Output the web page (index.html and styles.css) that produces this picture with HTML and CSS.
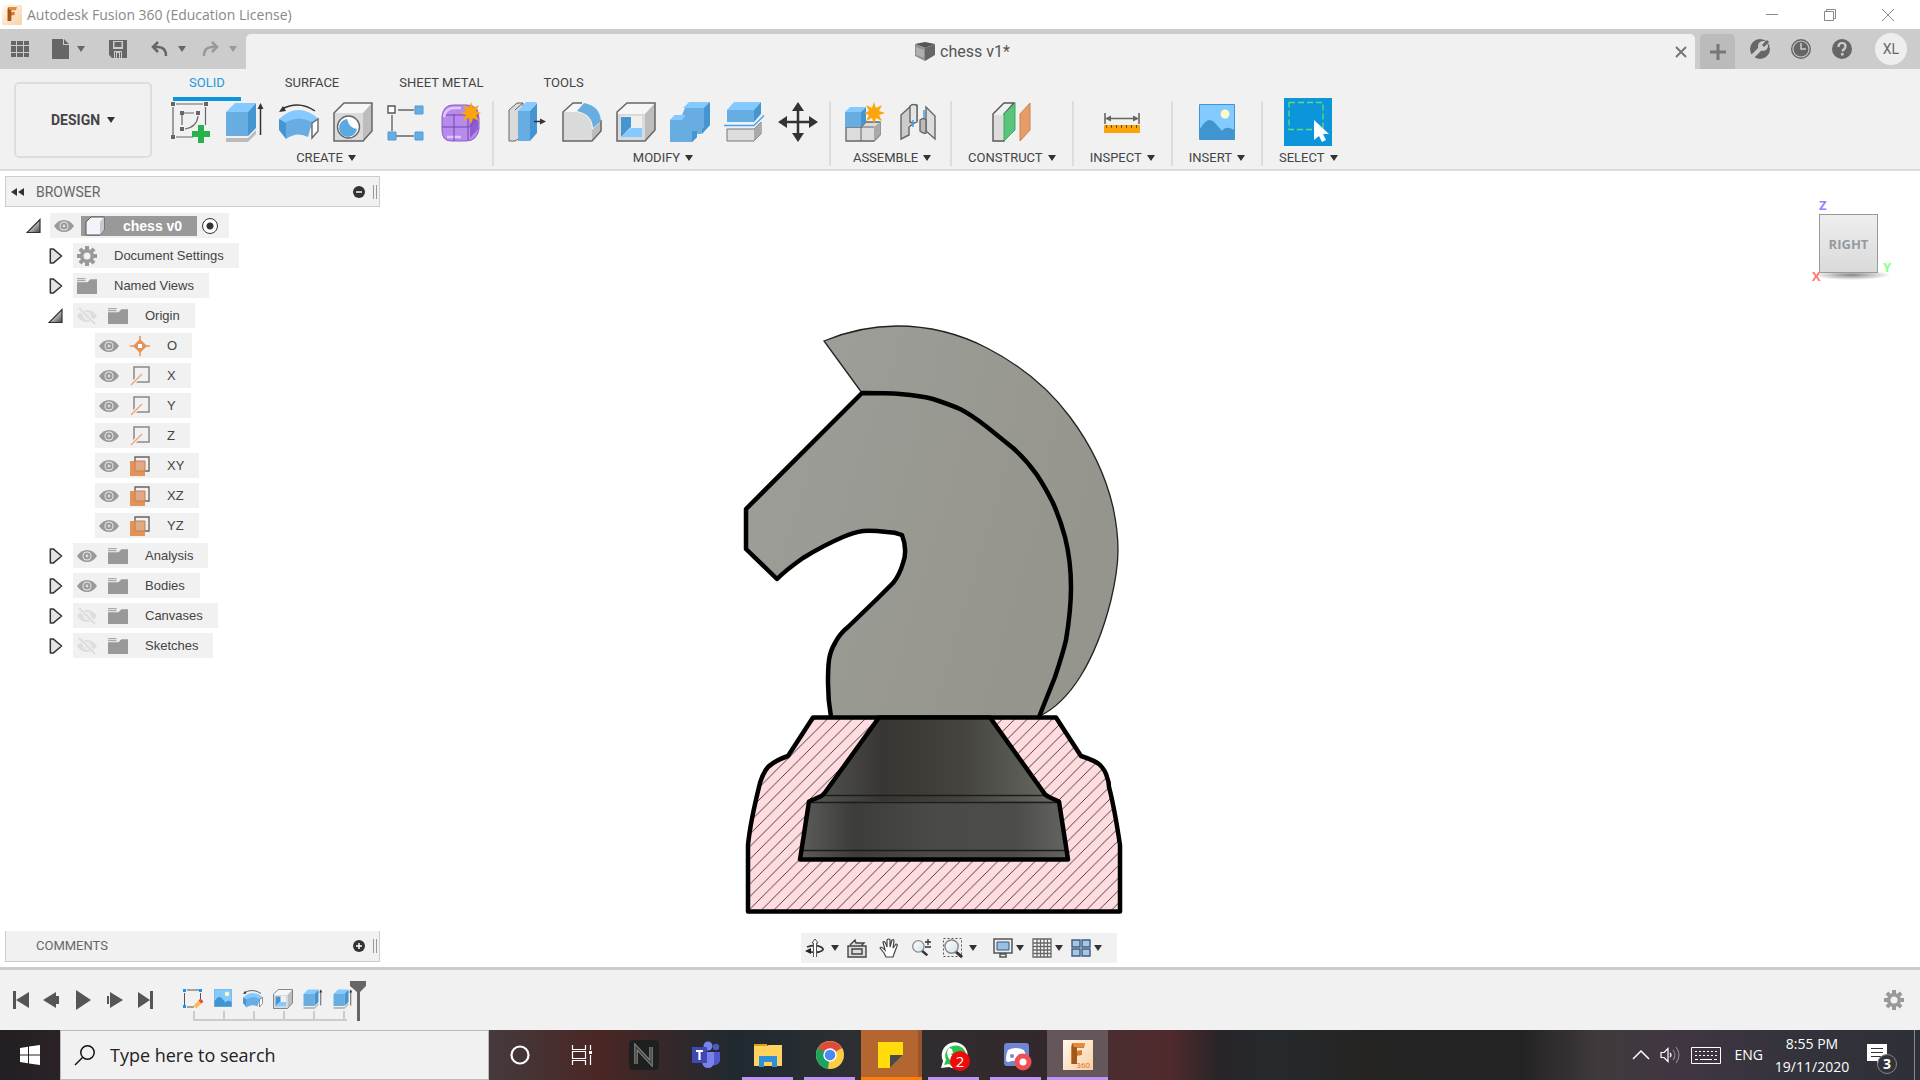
FILE: index.html
```html
<!DOCTYPE html>
<html lang="en">
<head>
<meta charset="utf-8">
<title>Autodesk Fusion 360 (Education License)</title>
<link rel="stylesheet" href="styles.css">
</head>
<body>
<svg class="defs" aria-hidden="true">
  <defs>
    <linearGradient id="tri" x1="0" y1="0" x2="1" y2="1"><stop offset="0.3" stop-color="#eee"/><stop offset="1" stop-color="#444"/></linearGradient>
    <linearGradient id="paper" x1="0" y1="0" x2="1" y2="1"><stop offset="0" stop-color="#fff8ef"/><stop offset="1" stop-color="#fbcfa4"/></linearGradient>
    <linearGradient id="lens" x1="0" y1="0" x2="1" y2="1"><stop offset="0" stop-color="#fff"/><stop offset="1" stop-color="#cfe2ea"/></linearGradient>
  </defs>
  <symbol id="fusion" viewBox="0 0 30 30"><path fill="url(#paper)" d="M0 0h30v30H0z"/><path fill="#d87c2a" d="M9 3h13l-1 5h-7l-1 3 6-1v5l-6 1v7l-5 1V7z"/><path fill="#a2571b" d="M9 3l5 5v16H9z"/><path fill="#e58b3c" d="M9 3h13l-2 4h-9z"/></symbol>
  <symbol id="eye" viewBox="0 0 20 14"><path fill="#999" d="M0 7Q4 1 10 1t10 6q-4 6-10 6T0 7z"/><circle cx="10" cy="7" r="4.500" fill="#eee"/><circle cx="10" cy="7" r="3.500" fill="#999"/><circle cx="10" cy="7" r="1.400" fill="#ddd"/></symbol>
  <symbol id="eye-off" viewBox="0 0 20 16"><path fill="#ddd" d="M0 8q4-6 10-6t10 6q-4 6-10 6T0 8z"/><circle cx="10" cy="8" r="4" fill="#eee"/><circle cx="10" cy="8" r="2.600" fill="#ddd"/><path d="M1 0l18 16" stroke="#f1f1f1" stroke-width="4"/><path d="M2 0l16 16" stroke="#ddd" stroke-width="2"/></symbol>
  <symbol id="folder" viewBox="0 0 21 17"><path fill="#999" d="M0 4.500h11l3-3h7V17H0z"/><path fill="#aaa" d="M0 0h9v1.500H0zM0 2.200h9v1.300H0z"/></symbol>
  <symbol id="gear" viewBox="0 0 20 20"><g fill="#999"><path d="M8 0h4v20H8z"/><path d="M8 0h4v20H8z" transform="rotate(45 10 10)"/><path d="M8 0h4v20H8z" transform="rotate(90 10 10)"/><path d="M8 0h4v20H8z" transform="rotate(135 10 10)"/><circle cx="10" cy="10" r="7"/></g><circle cx="10" cy="10" r="3.500" fill="#f1f1f1"/></symbol>
  <symbol id="closed" viewBox="0 0 13 17"><path d="M1 1h3l9 7.500-9 7.500H1z" fill="#e4e4e8" stroke="#333" stroke-width="1.600" stroke-linejoin="round"/></symbol>
  <symbol id="open" viewBox="0 0 15 15"><path d="M14 1v13H1z" fill="url(#tri)" stroke="#333" stroke-width="1.200"/></symbol>
  <symbol id="axis" viewBox="0 0 20 20"><path d="M4 1h15v15H4z" fill="none" stroke="#888" stroke-width="1.500"/><path d="M1 19L12 8" stroke="#f1f1f1" stroke-width="4"/><path d="M1 19L12 8" stroke="#f0a878" stroke-width="1.500"/></symbol>
  <symbol id="plane" viewBox="0 0 20 20"><path d="M5 1h14v14H5z" fill="none" stroke="#666" stroke-width="1.400"/><path fill="#e59257" d="M0 5h15v15H0z"/><path d="M5 5h10v10H5z" fill="#e0a983" stroke="#bd8158"/></symbol>
  <symbol id="origin" viewBox="0 0 20 20"><path d="M10 0v20M0 10h20" stroke="#e59257" stroke-width="1.500"/><path fill="#e59257" d="M10 3l7 7-7 7-7-7z"/><path fill="#fff" d="M8 8h4v4H8z"/></symbol>
  <symbol id="extrude" viewBox="0 0 40 40"><path fill="#bbb" d="M1 36l8-8h22v4l-8 8H1z"/><path fill="#f1f1f1" d="M1 34l8-8h22v2l-8 8H1z"/><path fill="#67ade2" d="M1 10h22v24H1z"/><path fill="#84c9ff" d="M1 10l9-9h21l-8 9z"/><path fill="#4595d1" d="M23 10l8-9v25l-8 8z"/><path d="M35.500 33V3" stroke="#333" stroke-width="1.500"/><path fill="#333" d="M35.500 1l3 6h-6z"/></symbol>
  <symbol id="revolve" viewBox="0 0 40 40"><path fill="#84c9ff" d="M0 17q19-18 40 0l-7 10q-13-9-26 0z"/><path fill="#67ade2" d="M7 20q13-7 26 0l-4 15q-11-6-22 2z"/><path fill="#4595d1" d="M0 17l7 4v16l-7-9z"/><path d="M33 21l6-4v12l-6 7z" fill="#fff" stroke="#666" stroke-width="1.400"/><path d="M3 7q17-9 33 2" fill="none" stroke="#333" stroke-width="1.500"/><path fill="#333" d="M0 10l4-6 3 5z"/></symbol>
  <symbol id="image" viewBox="0 0 36 36"><path d="M.5.500h35v35H.500z" fill="#83cbff" stroke="#4094d0"/><path fill="#4094d0" d="M1 25q8-14 15-6l7 8q4-6 12-1v9H1z"/><circle cx="26" cy="10" r="4.500" fill="#fdf9c9"/></symbol>
  <symbol id="shell" viewBox="0 0 40 40"><path d="M1 12L12 1h27L29 12z" fill="#f6f6f6"/><path fill="#bdbdbd" d="M29 12L39 1v27L29 39z"/><path fill="#dadada" d="M1 12h28v27H1z"/><path d="M1 10L11 1h28v27L29 39H1z" fill="none" stroke="#666" stroke-width="1.500"/><path fill="#efefef" d="M5 14h21v21H5z"/><path fill="#4595d1" d="M5 15h10v10L5 35z"/><path fill="#84c9ff" d="M5 35l10-9h11v9z"/></symbol>
  <symbol id="magnifier" viewBox="0 0 22 22"><path d="M13 14l7 6" stroke="#333" stroke-width="3"/><circle cx="9" cy="9" r="7" fill="url(#lens)" stroke="#888" stroke-width="1.500"/></symbol>
</svg>

<header class="titlebar">
  <svg class="i20"><use href="#fusion"/></svg>
  <h1>Autodesk Fusion 360 (Education License)</h1>
  <div class="window-buttons">
    <button aria-label="Minimise"><svg width="12" height="12" viewBox="0 0 12 12"><path d="M0 5.500h12" stroke="#888"/></svg></button>
    <button aria-label="Restore"><svg width="12" height="12" viewBox="0 0 12 12"><path d="M.5 2.500h9v9h-9zM2.500 2.500v-2h9v9h-2" fill="none" stroke="#888"/></svg></button>
    <button aria-label="Close"><svg width="12" height="12" viewBox="0 0 12 12"><path d="M0 0l12 12M12 0L0 12" stroke="#888"/></svg></button>
  </div>
</header>

<div class="appbar">
  <div class="quick">
    <button aria-label="Data panel"><svg width="18" height="18" viewBox="0 0 18 18" fill="#666"><path d="M0 1h5v4H0zm6 0h6v4H6zm7 0h5v4h-5zM0 6h5v6H0zm6 0h6v6H6zm7 0h5v6h-5zM0 13h5v4H0zm6 0h6v4H6zm7 0h5v4h-5z"/></svg></button>
    <button class="file" aria-label="File"><svg width="17" height="20" viewBox="0 0 17 20"><path fill="#666" d="M0 0h11v6h6v14H0zM12 0l5 5h-5z"/></svg><span class="caret"></span></button>
    <button class="save" aria-label="Save"><svg width="18" height="18" viewBox="0 0 18 18"><path fill="#666" d="M0 0h18v18H3l-3-3z"/><path d="M4 1h10v8H4zM5 11h8v7H5z" fill="#ccc"/><path d="M5.500 2h7v5h-7zM8 13h2v5H8zM6 12h1v6H6zm5 0h1v6h-1z" fill="#666"/></svg></button>
    <button class="undo" aria-label="Undo"><svg width="17" height="16" viewBox="0 0 17 16"><path d="M7 1L2 6l5 5M2 6h5q8 0 8 9" fill="none" stroke="#666" stroke-width="2.500"/></svg><span class="caret"></span></button>
    <button class="redo" aria-label="Redo"><svg width="17" height="16" viewBox="0 0 17 16"><path d="M10 1l5 5-5 5M15 6h-5q-8 0-8 9" fill="none" stroke="#999" stroke-width="2.500"/></svg><span class="caret"></span></button>
  </div>
  <div class="doc-tab">
    <svg width="20" height="20" viewBox="0 0 20 20"><path fill="#555" d="M0 2l10-2 10 2-10 4z"/><path fill="#8f9191" d="M0 2l10 4v13L0 14z"/><path fill="#aeb0b0" d="M1 5l8 3v8l-8-3z"/><path fill="#666" d="M10 6l10-4v11l-10 6z"/></svg>
    <span>chess v1*</span>
    <button class="tab-close" aria-label="Close tab"><svg width="12" height="12" viewBox="0 0 12 12"><path d="M1 1l10 10M11 1L1 11" stroke="#777" stroke-width="2"/></svg></button>
  </div>
  <button class="new-tab" aria-label="New tab"><svg width="16" height="16" viewBox="0 0 16 16"><path d="M8 0v16M0 8h16" stroke="#777" stroke-width="3"/></svg></button>
  <div class="account">
    <button aria-label="Extensions"><svg width="20" height="20" viewBox="0 0 20 20"><circle cx="10" cy="10" r="10" fill="#666"/><path d="M2 18L11 9" stroke="#ccc" stroke-width="4"/><circle cx="13" cy="7" r="5" fill="#ccc"/><path d="M13 7l5-5" stroke="#666" stroke-width="3"/></svg></button>
    <button aria-label="Job status"><svg width="20" height="20" viewBox="0 0 20 20"><circle cx="10" cy="10" r="9.300" fill="none" stroke="#666" stroke-width="1.400"/><circle cx="10" cy="10" r="7.500" fill="#666"/><path d="M10 4v6h5" fill="none" stroke="#ccc" stroke-width="1.500"/></svg></button>
    <button aria-label="Help"><svg width="20" height="20" viewBox="0 0 20 20"><circle cx="10" cy="10" r="10" fill="#666"/><path d="M6.500 8q0-4 3.500-4t3.500 3-3.500 5" fill="none" stroke="#ccc" stroke-width="2.200"/><path fill="#ccc" d="M9 14h2.500v2.500H9z"/></svg></button>
    <button class="avatar">XL</button>
  </div>
</div>

<div class="toolbar">
  <button class="workspace">DESIGN<span class="caret"></span></button>
  <div class="ribbon">
    <nav class="tabs">
      <a class="active" href="#solid">SOLID</a><a href="#surface">SURFACE</a><a href="#sheet">SHEET METAL</a><a href="#tools">TOOLS</a>
    </nav>
    <div class="groups">
      <section class="group create">
        <div class="icons">
          <svg class="i40" viewBox="0 0 40 40"><path d="M5 2h27M2 5v28M5 35h17M34.500 5v18M13 11h10M11 13v10M14 27q12-2 13-13" fill="none" stroke="#666" stroke-width="1.200"/><path fill="#666" d="M0 0h4v4H0zM33 0h4v4h-4zM0 33h4v4H0zM9 9h4v4H9zM25 9h4v4h-4zM9 25h4v4H9z"/><path fill="#28b14c" d="M27 23h6v6h6v6h-6v6h-6v-6h-6v-6h6z"/></svg>
          <svg class="i40"><use href="#extrude"/></svg>
          <svg class="i40"><use href="#revolve"/></svg>
          <svg class="i40" viewBox="0 0 40 40"><path fill="#f6f6f6" d="M1 11L11 1h28L30 11z"/><path fill="#bdbdbd" d="M30 11l9-10v28L30 39z"/><path fill="#dadada" d="M1 11h29v28H1z"/><path d="M1 11L11 1h28v28L30 39H1z" fill="none" stroke="#666" stroke-width="1.500"/><circle cx="15.500" cy="25" r="11" fill="#fff" stroke="#666" stroke-width="1.400"/><path fill="#5ba9e2" d="M14 17q2 9 10 10a9 9 0 1 1-10-10z"/></svg>
          <svg class="i40" viewBox="0 0 40 40"><path d="M11 8h16M5 13v16M9 34h18" stroke="#666" stroke-width="1.400"/><path fill="#fff" stroke="#555" stroke-width="1.400" d="M1 4h7v7H1z"/><path fill="#67ade2" stroke="#4d9cd8" d="M28 4h8v8h-8zM1 30h8v8H1zM28 30h8v8h-8z"/></svg>
          <svg class="i40" viewBox="0 0 40 40"><path fill="#b68bec" stroke="#8a5cc4" d="M1 15Q2 3 12 3h14q12 0 12 14v10q-2 12-13 12H10Q1 39 1 28z"/><path fill="#8e5cd0" d="M29 16l8-9v20l-8 9z"/><path d="M3 15q1-8 9-9h8M6 35h14" stroke="#dfc8ff" stroke-width="2.500" fill="none"/><path d="M13 12v27M1 25h27l9-9M5 13h22M27 13v25" stroke="#7447ad" stroke-width="1" fill="none"/><path fill="#fba40b" d="M30 0l2 6 6-3-3 6 5 2-5 2 3 6-6-3-2 6-2-6-6 3 3-6-5-2 5-2-3-6 6 3z"/></svg>
        </div>
        <button class="label">CREATE<span class="caret"></span></button>
      </section>
      <section class="group modify">
        <div class="icons">
          <svg class="i40" viewBox="0 0 40 40"><path fill="#dadada" stroke="#666" d="M1 8l8-7h6v33l-8 5H1z"/><path d="M7 8l8-7" stroke="#666"/><path fill="#67ade2" d="M10 9h12v30H10z"/><path fill="#84c9ff" d="M10 9l8-9h11l-7 9z"/><path fill="#4595d1" d="M22 9l7-8v30l-7 8z"/><path d="M26 19.500h8" stroke="#333" stroke-width="1.500"/><path fill="#333" d="M38 19.500l-6-3v6z"/></svg>
          <svg class="i40" viewBox="0 0 40 40"><path fill="#f6f6f6" d="M1 10L10 1h10l-4 9z"/><path fill="#bdbdbd" d="M30 28l9-9v9l-9 11z"/><path fill="#dadada" d="M1 10h14q15 3 15 18v11H1z"/><path d="M20 1h-9L1 10v29h29l9-10V18" fill="none" stroke="#666" stroke-width="1.500"/><path fill="#67ade2" d="M15 9l7-8q16 3 17 18l-8 7Q30 12 15 9z"/></svg>
          <svg class="i40"><use href="#shell"/></svg>
          <svg class="i40" viewBox="0 0 40 40"><path fill="#67ade2" d="M0 18l5-5h7l3-7 5-5h20v22l-9 9h-4v3l-5 5H0z"/><path fill="#84c9ff" d="M0 18l5-5h11l-4 5zM13 6l6-6h21l-6 6z"/><path fill="#4595d1" d="M34 6l6-6v23l-8 9v-5l2-2zM22 40V29h5v6z"/></svg>
          <svg class="i40" viewBox="0 0 40 40"><path fill="#67ade2" d="M3 8h27v12H3z"/><path fill="#84c9ff" d="M3 8l7-8h27l-7 8z"/><path fill="#4595d1" d="M30 8l7-8v12l-7 8z"/><path d="M0 23.500h30l10-10" stroke="#42a5ef" stroke-width="1.500" fill="none"/><path d="M3 27h27l7-7v12l-7 7H3z" fill="#ddd" stroke="#777"/><path d="M30 27l7-7v12l-7 7z" fill="#aaa"/></svg>
          <svg class="i40" viewBox="0 0 40 40"><path d="M20 5v30M5 20h30" stroke="#333" stroke-width="2.500"/><path fill="#333" d="M20 0l6 9H14zM20 40l6-9H14zM0 20l9-6v12zM40 20l-9-6v12z"/></svg>
        </div>
        <button class="label">MODIFY<span class="caret"></span></button>
      </section>
      <section class="group assemble">
        <div class="icons">
          <svg class="i40" viewBox="0 0 40 40"><path d="M1 25h15l5-5h14v13l-6 6H1z" fill="#dcdcdc" stroke="#666" stroke-width="1.300"/><path fill="#aaa" d="M29 25l6-5v13l-6 6z"/><path d="M16 25h13M16 25v14" stroke="#666"/><path fill="#67ade2" d="M0 10h16v15H0z"/><path fill="#84c9ff" d="M0 10l5-5h16l-5 5z"/><path fill="#4595d1" d="M16 10l5-5v15l-5 5z"/><path fill="#fba40b" d="M29 0l2 6 6-3-3 6 6 2-6 2 3 6-6-3-2 6-2-6-6 3 3-6-5-2 5-2-3-6 6 3z"/></svg>
          <svg class="i40" viewBox="0 0 40 40"><g stroke="#666" stroke-width="1.400"><path fill="#ccc" d="M2 13L13 3h5v16l-8 6v8l-8 4z"/><path fill="#e4e4e4" d="M11 4q4-3 7 0v16q-3 2-7 0z"/><path fill="#dcdcdc" d="M27 5l9 9v23l-9-8z"/><path fill="#bbb" d="M21 18q4-3 6 0v13q-3 1-6-2z"/></g><path d="M14 18v7M25 8v8" stroke="#42a5ef" stroke-width="1.600"/></svg>
        </div>
        <button class="label">ASSEMBLE<span class="caret"></span></button>
      </section>
      <section class="group">
        <div class="icons"><svg class="i40" viewBox="0 0 40 40"><path d="M1 12L12 1h10L12 12v27H1z" fill="#f0f0f0" stroke="#555" stroke-width="1.400"/><path fill="#ddd" d="M2 13h10v25H2z"/><path fill="#5bc47c" stroke="#39a961" d="M12 12L23 1v27L12 39z"/><path fill="#e59c69" stroke="#ce8150" d="M28 12L38 1v27L28 39z"/></svg></div>
        <button class="label">CONSTRUCT<span class="caret"></span></button>
      </section>
      <section class="group">
        <div class="icons"><svg class="i40" viewBox="0 0 40 40"><path d="M3 11v11M37 11v11M5 16.500h30" stroke="#666" stroke-width="1.600"/><path fill="#666" d="M3 16.500l6-3v6zM37 16.500l-6-3v6z"/><path fill="#fba40b" d="M2 23h36v8H2z"/><path d="M4 24.500h32" stroke="#5c5024" stroke-width="3" stroke-dasharray="1 4"/></svg></div>
        <button class="label">INSPECT<span class="caret"></span></button>
      </section>
      <section class="group">
        <div class="icons"><svg class="i36"><use href="#image"/></svg></div>
        <button class="label">INSERT<span class="caret"></span></button>
      </section>
      <section class="group">
        <div class="icons"><svg class="i48" viewBox="0 0 48 48"><path fill="#0c95da" d="M0 0h48v48H0z"/><path d="M5 4.500h34v27H5z" fill="none" stroke="#5fdc7b" stroke-width="1.300" stroke-dasharray="6 3"/><path fill="#fff" d="M30 22v20l5-4 3 6 4-2-3-6h6z"/></svg></div>
        <button class="label">SELECT<span class="caret"></span></button>
      </section>
    </div>
  </div>
</div>

<main class="canvas">
  <aside class="browser">
    <div class="panel-bar">
      <svg width="13" height="8" viewBox="0 0 13 8"><path d="M6 0v8L0 4zM13 0v8L7 4z" fill="#333"/></svg>
      <h2>BROWSER</h2>
      <button aria-label="Collapse"><svg width="12" height="12" viewBox="0 0 12 12"><circle cx="6" cy="6" r="6" fill="#333"/><path d="M3 6h6" stroke="#fff" stroke-width="1.500"/></svg></button><i class="grip"></i>
    </div>
    <ul class="tree">
      <li class="l0"><svg class="arrow"><use href="#open"/></svg><div class="item"><svg class="i20"><use href="#eye"/></svg><span class="selected"><svg class="i20" viewBox="0 0 20 20"><path d="M1 6l5-5h13v13l-4 5H1z" fill="#f3f4fa" stroke="#555" stroke-linejoin="round"/><path d="M15 6l4-5v13l-4 5z" fill="#c8c8d0"/></svg><b>chess v0</b></span><input type="radio" checked aria-label="Activate chess v0"></div></li>
      <li class="l1"><svg class="arrow"><use href="#closed"/></svg><div class="item"><svg class="i20"><use href="#gear"/></svg><span>Document Settings</span></div></li>
      <li class="l1"><svg class="arrow"><use href="#closed"/></svg><div class="item"><svg class="i20"><use href="#folder"/></svg><span>Named Views</span></div></li>
      <li class="l1"><svg class="arrow"><use href="#open"/></svg><div class="item"><svg class="i20"><use href="#eye-off"/></svg><svg class="i20"><use href="#folder"/></svg><span>Origin</span></div></li>
      <li class="l2"><div class="item"><svg class="i20"><use href="#eye"/></svg><svg class="i20"><use href="#origin"/></svg><span>O</span></div></li>
      <li class="l2"><div class="item"><svg class="i20"><use href="#eye"/></svg><svg class="i20"><use href="#axis"/></svg><span>X</span></div></li>
      <li class="l2"><div class="item"><svg class="i20"><use href="#eye"/></svg><svg class="i20"><use href="#axis"/></svg><span>Y</span></div></li>
      <li class="l2"><div class="item"><svg class="i20"><use href="#eye"/></svg><svg class="i20"><use href="#axis"/></svg><span>Z</span></div></li>
      <li class="l2"><div class="item"><svg class="i20"><use href="#eye"/></svg><svg class="i20"><use href="#plane"/></svg><span>XY</span></div></li>
      <li class="l2"><div class="item"><svg class="i20"><use href="#eye"/></svg><svg class="i20"><use href="#plane"/></svg><span>XZ</span></div></li>
      <li class="l2"><div class="item"><svg class="i20"><use href="#eye"/></svg><svg class="i20"><use href="#plane"/></svg><span>YZ</span></div></li>
      <li class="l1"><svg class="arrow"><use href="#closed"/></svg><div class="item"><svg class="i20"><use href="#eye"/></svg><svg class="i20"><use href="#folder"/></svg><span>Analysis</span></div></li>
      <li class="l1"><svg class="arrow"><use href="#closed"/></svg><div class="item"><svg class="i20"><use href="#eye"/></svg><svg class="i20"><use href="#folder"/></svg><span>Bodies</span></div></li>
      <li class="l1"><svg class="arrow"><use href="#closed"/></svg><div class="item"><svg class="i20"><use href="#eye-off"/></svg><svg class="i20"><use href="#folder"/></svg><span>Canvases</span></div></li>
      <li class="l1"><svg class="arrow"><use href="#closed"/></svg><div class="item"><svg class="i20"><use href="#eye-off"/></svg><svg class="i20"><use href="#folder"/></svg><span>Sketches</span></div></li>
    </ul>
  </aside>

  <svg class="model" viewBox="740 320 386 600" role="img" aria-label="Section view of a chess knight">
    <defs>
      <pattern id="hatch" width="12.500" height="12.500" patternUnits="userSpaceOnUse" patternTransform="translate(9 0)"><path fill="#fedcdf" d="M0 0h12.500v12.500H0z"/><path d="M-1 1L1-1M-1 13.500L13.500-1M11.500 13.500l2-2" stroke="#1a1a1a" stroke-width=".8"/></pattern>
      <linearGradient id="skin" x1="0" y1="0" x2="1" y2="0.300"><stop offset="0" stop-color="#9e9e98"/><stop offset="1" stop-color="#95958e"/></linearGradient>
      <linearGradient id="cone"><stop offset="0" stop-color="#565652"/><stop offset=".3" stop-color="#373632"/><stop offset=".62" stop-color="#45443f"/><stop offset="1" stop-color="#6a6b66"/></linearGradient>
      <linearGradient id="band"><stop offset="0" stop-color="#5c5d59"/><stop offset=".2" stop-color="#3c3c38"/><stop offset=".5" stop-color="#4a4a46"/><stop offset=".8" stop-color="#4c4d48"/><stop offset="1" stop-color="#646560"/></linearGradient>
    </defs>
    <path fill="url(#skin)" stroke="#222" stroke-width="1.300" d="M862 393L824 341C848 331 872 326 897 326C929 326 958 333 987 348C1018 364 1047 386 1070 417C1088 441 1105 473 1113 507C1116 521 1118 536 1118 550C1118 567 1115 583 1111 600C1104 628 1095 653 1080 677C1068 696 1056 708 1040 716L980 600z"/>
    <path fill="url(#skin)" stroke="#000" stroke-width="4.500" stroke-linejoin="round" d="M831 717C829 706 828 695 828 683C828 675 828 667 829 660C830 653 832 648 835 643C838 637 843 631 848 627L878 598L893 583C898 577 901 570 903 563C906 556 906 545 902 535C897 533 892 532 887 532C879 531 871 530 863 531C856 532 850 534 843 537C829 543 816 550 803 558C793 565 785 571 777 579L746 549V509L862 393C875 393 888 393 900 394C911 395 922 396 933 399C942 402 951 405 960 409C970 414 978 420 987 427L1013 448C1022 456 1030 465 1037 475C1043 484 1048 493 1053 503C1058 514 1062 526 1065 537C1069 553 1071 570 1071 587C1071 604 1069 622 1066 640C1063 653 1059 665 1055 677L1039 717"/>
    <path fill="url(#hatch)" stroke="#000" stroke-width="4.500" stroke-linejoin="round" d="M813 717.500H1056L1081 756C1090 759 1096 761 1100 765C1104 769 1106 773 1107 777Q1109 782 1109 787C1114 806 1117 825 1120 845V911.500H748V845C750 824 755 803 760 783Q763 773 768 767Q776 760 788 756z"/>
    <path fill="url(#cone)" d="M879 718h111l55 79 14 5H809l15-6z"/>
    <path fill="url(#band)" d="M809 801h250l9 58H800z"/>
    <path d="M824 795.500h220M810 802.500h248M802 850.500h264" stroke="#1d1d1b" stroke-width="1.500"/>
    <path fill="none" stroke="#000" stroke-width="4.500" stroke-linejoin="round" d="M879 717.500h111l53 74q2 4 7 6l9 4 9 58H800l9-58 9-4q4-1 7-5z"/>
  </svg>

  <div class="viewcube">
    <span class="ax z">Z</span><span class="ax x">X</span><span class="ax y">Y</span>
    <button class="face">RIGHT</button>
  </div>

  <footer class="canvas-foot">
    <div class="panel-bar comments">
      <h2>COMMENTS</h2>
      <button aria-label="Add comment"><svg width="12" height="12" viewBox="0 0 12 12"><circle cx="6" cy="6" r="6" fill="#333"/><path d="M3 6h6M6 3v6" stroke="#fff" stroke-width="1.500"/></svg></button><i class="grip"></i>
    </div>
    <div class="navbar">
      <button class="nb has-menu wide" aria-label="Orbit"><svg class="i20" viewBox="0 0 20 20"><path d="M2 9q8-3 14 0 5 3-2 5-7 1-11-1" fill="none" stroke="#333" stroke-width="1.800"/><path fill="#222" d="M0 13l6-3v6z"/><path d="M8.500 19V5H7l3-4 3 4h-1.500v14" fill="#fff" stroke="#555"/></svg><span class="caret"></span></button>
      <button class="nb" aria-label="Look at"><svg class="i20" viewBox="0 0 20 20"><path d="M1 8h18v11H1zM3 7l5-5 1 3h8l-3 3M5 11h10v5H5z" fill="#ddd" stroke="#444" stroke-width="1.400"/></svg></button>
      <button class="nb" aria-label="Pan"><svg class="i20" viewBox="0 0 20 20"><path d="M7 19l-2-4-4-5q1-2 5 2L4 4q2-2 4 5V2q2-2 3 0v7l2-7q2-1 2 1l-1 7 3-4q2 0 1 2l-3 8-1 3z" fill="#fff" stroke="#444" stroke-width="1.200"/></svg></button>
      <button class="nb" aria-label="Zoom"><svg class="i20" viewBox="0 0 20 20"><use href="#magnifier" width="18" height="20"/><path d="M14 4h6M17 1v6M14 9h6" stroke="#333" stroke-width="1.300"/></svg></button>
      <button class="nb has-menu wide" aria-label="Zoom window"><svg class="i20" viewBox="0 0 20 20"><path d="M.5.500h18v18H.500z" fill="none" stroke="#555" stroke-dasharray="2 2"/><use href="#magnifier" width="21" height="21"/></svg><span class="caret"></span></button>
      <button class="nb has-menu gap" aria-label="Display settings"><svg class="i20" viewBox="0 0 20 20"><path d="M1 1h18v14H1zM7 16h6v3H7z" fill="#eee" stroke="#555" stroke-width="1.500"/><path d="M4 4h12v8H4z" fill="#9dbfe3" stroke="#2d5a8c"/></svg><span class="caret"></span></button>
      <button class="nb has-menu" aria-label="Grid"><svg class="i20" viewBox="0 0 20 20"><path d="M1 1h18v18H1zM5 1v18M8.500 1v18M12 1v18M15.500 1v18M1 5h18M1 8.500h18M1 12h18M1 15.500h18" fill="#fff" stroke="#666" stroke-width="1.300"/></svg><span class="caret"></span></button>
      <button class="nb has-menu" aria-label="Viewports"><svg class="i20" viewBox="0 0 20 20"><path d="M1 2h8v7H1zM11 2h8v7h-8zM1 11h8v7H1zM11 11h8v7h-8z" fill="#a9c6e8" stroke="#3d5c80" stroke-width="1.400"/></svg><span class="caret"></span></button>
    </div>
  </footer>
</main>

<section class="timeline">
  <div class="playback">
    <button aria-label="First"><svg class="i20" viewBox="0 0 20 20"><path fill="#555" d="M2 1h3v18H2zM18 2v16L5 10z"/></svg></button>
    <button aria-label="Back"><svg class="i20" viewBox="0 0 20 20"><path fill="#555" d="M14 2v16L1 10zM14 6h3v8h-3z"/></svg></button>
    <button aria-label="Play"><svg class="i20" viewBox="0 0 20 20"><path fill="#555" d="M3 0l15 10L3 20z"/></svg></button>
    <button aria-label="Forward"><svg class="i20" viewBox="0 0 20 20"><path fill="#555" d="M6 2v16l13-8zM3 6h2v8H3z"/></svg></button>
    <button aria-label="Last"><svg class="i20" viewBox="0 0 20 20"><path fill="#555" d="M3 2v16l12-8zM15 1h3v18h-3z"/></svg></button>
  </div>
  <div class="history">
    <span class="step"><svg class="i20" viewBox="0 0 20 20"><path d="M4 1h12M1.500 4v12M4 18h7M17.500 4v7" stroke="#555"/><path fill="#1e93e8" d="M0 0h3v3H0zM16 0h3v3h-3zM0 16h3v3H0z"/><path d="M12 18l6-6" stroke="#f9bd4c" stroke-width="4"/><path d="M17 13l2-2" stroke="#e34747" stroke-width="4"/></svg></span>
    <span class="step"><svg class="i18"><use href="#image"/></svg></span>
    <span class="step"><svg class="i20"><use href="#revolve"/></svg></span>
    <span class="step"><svg class="i20"><use href="#shell"/></svg></span>
    <span class="step"><svg class="i20"><use href="#extrude"/></svg></span>
    <span class="step"><svg class="i20"><use href="#extrude"/></svg><svg class="marker" width="16" height="40" viewBox="0 0 16 40"><path fill="#666" d="M0 0h16v5l-6 6v29H7V11L0 5z"/></svg></span>
  </div>
  <button class="settings" aria-label="Settings"><svg class="i20"><use href="#gear"/></svg></button>
</section>

<footer class="taskbar">
  <button class="start" aria-label="Start"><svg class="i20" viewBox="0 0 20 20"><path fill="#fff" d="M0 3l8-1.200V9.500H0zM9 1.600L20 0v9.500H9zM0 10.500h8v7.700L0 17zM9 10.500h11V20L9 18.400z"/></svg></button>
  <label class="search"><svg class="i20" viewBox="0 0 20 20"><circle cx="12.500" cy="7.500" r="6.700" fill="none" stroke="#111" stroke-width="1.500"/><path d="M7.500 12.500L0 20" stroke="#111" stroke-width="1.500"/></svg><input type="text" placeholder="Type here to search" aria-label="Search"></label>
  <div class="apps">
    <button aria-label="Cortana"><svg class="i20" viewBox="0 0 20 20"><circle cx="10" cy="10" r="8.500" fill="none" stroke="#fff" stroke-width="2.200"/></svg></button>
    <button aria-label="Task view"><svg class="i20" viewBox="0 0 20 20"><path d="M.5 0v4.500h13V0M.500 20v-4.500h13V20M.5 6.500h13v7H.500zM18.500 0v5M18.500 10v10" fill="none" stroke="#fff" stroke-width="1.200"/><path fill="#fff" d="M17 6h3v3h-3z"/></svg></button>
    <button aria-label="Notes"><svg class="i30" viewBox="0 0 30 30"><rect width="30" height="30" rx="4" fill="#1e2020"/><path d="M7 24V7l15 16V7" fill="none" stroke="#888" stroke-width="3.500"/><path d="M7 24V7l15 16V7" fill="none" stroke="#444" stroke-width="1.500"/></svg></button>
    <button aria-label="Teams"><svg class="i30" viewBox="0 0 30 30"><circle cx="17" cy="6" r="4.500" fill="#7b83eb"/><circle cx="25" cy="7" r="3.200" fill="#5059c9"/><path fill="#5059c9" d="M21 12h8v9q-2 5-8 4z"/><path fill="#7b83eb" d="M11 12h12v11q-1 5-6 5t-6-6z"/><path fill="#4048b4" d="M1 7h15v16H1z"/><path d="M5 11h7M8.500 11v9" stroke="#fff" stroke-width="2.200"/></svg></button>
    <button class="running" aria-label="File Explorer"><svg class="i30" viewBox="0 0 30 30"><path fill="#e0a00c" d="M1 4h13v6H1z"/><path fill="#ffd35d" d="M1 6h12l3-1h13v21H1z"/><path fill="#2f8fd8" d="M6 16h18v11h-5v-5h-8v5H6z"/></svg></button>
    <button class="running" aria-label="Chrome"><svg class="i30" viewBox="0 0 30 30"><circle cx="15" cy="15" r="14" fill="#ffcd42"/><path fill="#dd4b3e" d="M15 15H8L3 8a14 14 0 0 1 24 0z"/><path fill="#1ca261" d="M15 15l-2 14A14 14 0 0 1 3 8z"/><circle cx="15" cy="15" r="6.700" fill="#fff"/><circle cx="15" cy="15" r="5.300" fill="#4a8af4"/></svg></button>
    <button class="running alert" aria-label="Sticky Notes"><svg class="i30" viewBox="0 0 30 30"><path fill="#ffdc0a" d="M3 2h25v13L15 28H3z"/><path fill="#4a4a4a" d="M15 28V15h13z"/></svg></button>
    <button class="running" aria-label="WhatsApp"><svg class="i30" viewBox="0 0 30 30"><path fill="#fff" d="M2 28l2-7A13 13 0 1 1 10 27z"/><path fill="#2dc24f" d="M5 25l2-5A10.500 10.500 0 1 1 10 24z"/><path fill="#fff" d="M10 8l3 1 1 4-2 1q2 4 5 5l2-2 4 3q-1 4-6 3Q9 21 8 13q0-3 2-5z"/></svg><span class="badge">2</span></button>
    <button class="running" aria-label="Discord"><svg class="i30" viewBox="0 0 30 30"><rect x="3" y="3" width="25" height="23" rx="3" fill="#7186d2"/><path fill="#fff" d="M7 10q8-4 16 0 3 7 2 11-3 2-5 0H10q-2 2-5 0 0-7 2-11z"/><circle cx="11" cy="16" r="2" fill="#7186d2"/><circle cx="19" cy="16" r="2" fill="#7186d2"/><circle cx="22" cy="22" r="8.500" fill="#ee5055"/><circle cx="22" cy="22" r="3.500" fill="#fff"/></svg></button>
    <button class="running focused" aria-label="Fusion 360"><svg class="i30"><use href="#fusion"/></svg><small>360</small></button>
  </div>
  <div class="tray">
    <button aria-label="Hidden icons"><svg width="16" height="10" viewBox="0 0 16 10"><path d="M0 9l8-8 8 8" fill="none" stroke="#fff" stroke-width="1.500"/></svg></button>
    <button aria-label="Volume"><svg class="i20" viewBox="0 0 20 20"><path d="M1 7.500h3l4-4v13l-4-4H1zM10 8q2 2 0 4" fill="none" stroke="#fff" stroke-width="1.200"/><path d="M13 5q4 5 0 10M16 2q6 8 0 16" fill="none" stroke="#888" stroke-width="1.200"/></svg></button>
    <button aria-label="Keyboard"><svg width="30" height="17" viewBox="0 0 30 17"><path d="M.5.500h29v16H.500z" fill="none" stroke="#fff"/><path d="M4 4.500h22M4 8.500h22" stroke="#fff" stroke-dasharray="2 2"/><path d="M4 12.500h3M9 12.500h12M23 12.500h3" stroke="#fff"/></svg></button>
    <button class="lang">ENG</button>
    <button class="clock"><span>8:55 PM</span><span>19/11/2020</span></button>
    <button class="notify" aria-label="3 notifications"><svg width="20" height="20" viewBox="0 0 20 20"><path fill="#fff" d="M0 0h20v17h-7l-3 3v-3H0z"/><path d="M4 4.500h12M4 8.500h12M4 12.500h12" stroke="#333"/></svg><span class="count">3</span></button>
  </div>
</footer>
</body>
</html>
```
FILE: styles.css
```css
* { box-sizing: border-box; }
body { margin: 0; min-height: 100vh; display: flex; flex-direction: column; background: #fff; color: #444; font-family: Roboto, "Liberation Sans", sans-serif; font-size: 13px; line-height: 16px; }
button { border: 0; padding: 0; margin: 0; background: none; color: inherit; font: inherit; display: flex; align-items: center; justify-content: center; }
a { color: inherit; text-decoration: none; }
h1, h2, ul { margin: 0; padding: 0; font-weight: 400; font-size: inherit; }
svg { display: block; flex: none; overflow: visible; }
.defs { position: absolute; width: 0; height: 0; }
.i18 { width: 18px; height: 18px; }
.i20 { width: 20px; height: 20px; }
.i30 { width: 30px; height: 30px; }
.i36 { width: 36px; height: 36px; }
.i40 { width: 40px; height: 40px; }
.i48 { width: 48px; height: 48px; }
.caret { border: 4px solid transparent; border-top: 6px solid currentColor; border-bottom: 0; }

.titlebar { height: 29px; display: flex; align-items: center; gap: 5px; padding: 0 26px 0 2px; color: #888; }
.titlebar h1 { font: 14px/20px "Open Sans", "Noto Sans", sans-serif; }
.window-buttons { margin-left: auto; display: flex; gap: 46px; }

.appbar { display: flex; height: 40px; background: #ccc; color: #666; }
.quick { width: 246px; display: flex; align-items: center; padding-left: 11px; }
.file, .undo, .redo { gap: 8px; }
.quick .file { margin-left: 23px; }
.quick .save { margin-left: 24px; }
.quick .undo { margin-left: 24px; gap: 10px; }
.quick .redo { margin-left: 16px; gap: 10px; color: #999; }
.doc-tab { flex: 1; display: flex; align-items: center; justify-content: center; gap: 5px; margin-top: 5px; background: #f1f1f1; border-radius: 5px 5px 0 0; font-size: 16px; position: relative; color: #555; padding-right: 16px; }
.tab-close { position: absolute; right: 8px; top: 12px; }
.new-tab { width: 35px; margin: 5px 0 0 5px; background: #bbb; border-radius: 5px 5px 0 0; }
.account { display: flex; align-items: center; gap: 21px; padding: 0 13px 0 15px; }
.avatar { width: 32px; height: 32px; border-radius: 50%; background: #eee; margin-left: 2px; font-size: 14px; }

.toolbar { display: flex; height: 102px; background: #f1f1f1; border-bottom: 2px solid #ddd; padding-left: 14px; }
.workspace { width: 138px; height: 76px; margin-top: 13px; border: 2px solid #ddd; border-radius: 5px; font-weight: 700; font-size: 14px; gap: 7px; }
.workspace .caret, .label .caret { color: #333; }
.tabs { display: flex; gap: 28px; padding-left: 21px; }
.tabs a { padding: 6px 16px; border-bottom: 4px solid transparent; }
.tabs .active { color: #1a9ce0; border-color: #0c95da; }
.groups { display: flex; padding-left: 6px; }
.group { display: flex; flex-direction: column; align-items: center; padding: 0 16px; }
.group + .group { border-left: 2px solid #ddd; }
.create { padding: 0 11px 0 13px; }
.modify, .assemble { padding: 0 11px 0 14px; }
.icons { display: flex; gap: 14px; height: 42px; align-items: center; }
.label { gap: 5px; height: 16px; margin-top: 7px; white-space: nowrap; }

.canvas { flex: 1; position: relative; display: flex; flex-direction: column; justify-content: space-between; }
.browser { padding: 5px 0 0 5px; }
.panel-bar { width: 375px; height: 31px; border: 1px solid #ccc; background: #f1f1f1; display: flex; align-items: center; gap: 12px; padding: 0 2px 0 5px; color: #666; }
.panel-bar h2 { flex: 1; font-size: 14px; }
.panel-bar button { margin-right: -4px; }
.grip { width: 4px; height: 14px; border: 1px solid #999; border-width: 0 1px; }
.tree { list-style: none; margin-top: 6px; display: flex; flex-direction: column; gap: 5px; font: 13px/16px "Liberation Sans", Arial, sans-serif; }
.tree li { display: flex; align-items: center; height: 25px; }
.arrow { width: 15px; height: 16px; }
.item { display: flex; align-items: center; height: 25px; background: #f1f1f1; padding: 0 15px 0 4px; gap: 11px; }
.item span { margin-left: 6px; }
.l0 { padding-left: 21px; gap: 9px; }
.l1 { padding-left: 43px; gap: 10px; }
.l2 { padding-left: 90px; }
.item .selected { display: flex; align-items: center; height: 20px; background: #999; color: #fff; padding: 0 15px 0 4px; gap: 18px; margin-left: -4px; font-size: 14px; }
.item input { appearance: none; width: 16px; height: 16px; margin: 0 -4px 0 -6px; border: 1px solid #333; border-radius: 50%; background: radial-gradient(#333 3px, #fff 4px); }

.model { position: absolute; left: calc(50% - 220px); top: 149px; width: 386px; height: 600px; }

.viewcube { position: absolute; right: 29px; top: 23px; width: 79px; height: 90px; font: 700 13px/16px "Open Sans", sans-serif; }
.viewcube::after { content: ""; position: absolute; left: 0; top: 76px; width: 79px; height: 10px; background: radial-gradient(closest-side, #888, transparent); }
.face { position: absolute; z-index: 1; left: 7px; top: 20px; width: 59px; height: 59px; border: 1px solid #999; background: linear-gradient(#eee, #dadada); color: #959a9e; }
.ax { position: absolute; z-index: 2; }
.z { left: 7px; top: 3px; color: #88f; }
.x { left: 0; bottom: 0; color: #f77; }
.y { right: 0; top: 65px; color: #8f8; }

.canvas-foot { position: relative; padding: 0 0 5px 5px; }
.comments { border-top: 0; padding-left: 30px; }
.comments h2 { font-size: 13px; }
.navbar { position: absolute; left: calc(50% - 159px); bottom: 4px; height: 30px; width: 316px; background: #f1f1f1; display: flex; align-items: center; gap: 12px; padding: 0 4px; color: #333; }
.nb.has-menu { gap: 3px; margin-right: -4px; }
.nb.wide { gap: 6px; }
.nb.gap { margin-left: 8px; }

.timeline { height: 63px; border-top: 3px solid #ccc; background: #f1f1f1; display: flex; align-items: center; padding: 0 16px 0 11px; }
.playback { display: flex; gap: 11px; }
.history { display: flex; margin-left: 12px; padding-left: 11px; align-self: flex-start; }
.step { width: 30px; height: 51px; padding-top: 19px; display: flex; justify-content: center; position: relative; }
.step::before { content: ""; position: absolute; left: 15px; bottom: 0; width: 30px; height: 8px; border: 2px solid #ccc; border-width: 0 0 2px 2px; }
.step:last-child::before { width: 2px; }
.marker { position: absolute; left: 22px; top: 11px; }
.settings { margin-left: auto; }

.taskbar { height: 50px; display: flex; color: #fff; font-family: "Open Sans", "Noto Sans", sans-serif; background: linear-gradient(90deg, #231f23 0, #2a2226 60px, #453a3d 490px, #4a2623 600px, #1f2a30 735px, #2e2f33 860px, #33282b 1048px, #4a2d30 1110px, #502a2d 1170px, #282428 1220px, #262a2d 1270px, #252423 1360px, #232324 1520px, #403a3c 1600px, #403643 1680px, #33333b 1800px, #2e3037); }
.start { width: 60px; }
.search { width: 429px; display: flex; align-items: center; gap: 15px; padding-left: 14px; background: #f1f1f1; border: 1px solid #bbb; }
.search input { flex: 1; min-width: 0; border: 0; padding: 0; outline: 0; background: none; font: 18px/24px "Open Sans", "Noto Sans", sans-serif; }
.search input::placeholder { color: #222; opacity: 1; }
.apps { display: flex; gap: 1px; }
.apps button { width: 61px; position: relative; }
.running::after { content: ""; position: absolute; left: 5px; right: 5px; bottom: 0; height: 3px; background: #bf93f5; }
.alert { background: #b3662f; border-right: 4px solid #98562a; }
.alert::after { left: 0; right: -4px; background: #ff7b0a; }
.focused { background: #655759; }
.focused::after { left: 0; right: 0; }
.focused small { position: absolute; right: 18px; bottom: 10px; font: 8px/8px Roboto, sans-serif; color: #d87c2a; }
.badge { position: absolute; left: 27px; top: 21px; width: 20px; height: 20px; border-radius: 50%; background: #f00a0a; font-size: 15px; line-height: 20px; }
.tray { margin-left: auto; display: flex; align-items: center; padding-right: 5px; gap: 11px; font-size: 14px; }
.lang { margin: 0 -1px 0 3px; }
.clock { flex-direction: column; font-size: 14px; line-height: 23px; width: 78px; }
.notify { position: relative; margin: 0 17px 0 5px; padding-right: 10px; align-self: stretch; }
.notify svg { margin-bottom: 2px; }
.count { position: absolute; right: 0; top: 24px; width: 20px; height: 20px; border: 1px solid #888; border-radius: 50%; background: #33343a; font-weight: 700; line-height: 18px; }
.tray::after { content: ""; width: 1px; align-self: stretch; background: #888; margin-left: -11px; }
```
